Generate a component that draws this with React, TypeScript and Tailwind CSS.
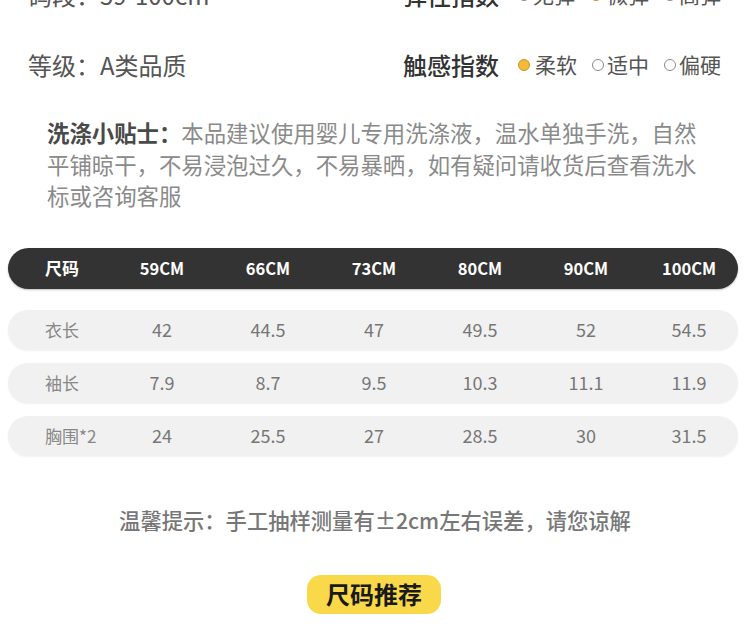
import * as React from 'react';

const sizes = ['59CM', '66CM', '73CM', '80CM', '90CM', '100CM'];

const rows = [
  { label: '衣长', values: ['42', '44.5', '47', '49.5', '52', '54.5'] },
  { label: '袖长', values: ['7.9', '8.7', '9.5', '10.3', '11.1', '11.9'] },
  { label: '胸围*2', values: ['24', '25.5', '27', '28.5', '30', '31.5'] },
];

const font = { fontFamily: '"Noto Sans CJK SC", "Noto Sans", sans-serif' };

// one option dot: filled yellow when selected, hollow ring otherwise
function Dot({ on }: { on?: boolean }) {
  return on ? (
    <span className="inline-block w-[12px] h-[12px] rounded-full bg-[#f2bb3a] border border-[#c99420] mr-[5px]" />
  ) : (
    <span className="inline-block w-[12px] h-[12px] rounded-full border-[1.5px] border-[#8a8a8a] mr-[3px]" />
  );
}

function Index({ title, options, active }: { title: string; options: string[]; active: number }) {
  return (
    <div className="flex items-center">
      <span className="text-[24px] text-[#333] font-medium mr-[19px]">{title}</span>
      {options.map((o, i) => (
        <span key={o} className="flex items-center text-[21px] text-[#555] mr-[15px]">
          <Dot on={i === active} />
          {o}
        </span>
      ))}
    </div>
  );
}

export default function App() {
  return (
    <div className="w-[750px] h-[635px] bg-white overflow-hidden" style={font}>
      <div className="flex justify-between items-center h-[30px] mt-[-20px] pl-[28px]">
        <span className="text-[24px] text-[#555]">码段：59-100cm</span>
        <div className="w-[347px]">
          <Index title="弹性指数" options={['无弹', '微弹', '高弹']} active={1} />
        </div>
      </div>

      <div className="flex justify-between items-center h-[30px] mt-[40px] pl-[28px]">
        <span className="text-[24px] text-[#555]">等级：A类品质</span>
        <div className="w-[347px]">
          <Index title="触感指数" options={['柔软', '适中', '偏硬']} active={0} />
        </div>
      </div>

      <p className="mt-[37px] pl-[47px] text-[22.4px] leading-[31.5px] text-[#8a8a8a]">
        <span className="font-bold text-[#4a4a4a]">洗涤小贴士：</span>
        本品建议使用婴儿专用洗涤液，温水单独手洗，自然
        <br />
        平铺晾干，不易浸泡过久，不易暴晒，如有疑问请收货后查看洗水
        <br />
        标或咨询客服
      </p>

      <div className="mt-[36px] mx-[8px] w-[730px] h-[41px] rounded-full bg-[#333333] grid grid-cols-[101px_repeat(5,106px)_100px] items-center text-white text-[16.5px] font-bold shadow-[0_1px_2px_rgba(0,0,0,0.25)]">
        <span className="pl-[37px] text-[17px]">尺码</span>
        {sizes.map((s) => (
          <span key={s} className="text-center">{s}</span>
        ))}
      </div>

      <div className="mt-[21px] flex flex-col gap-[13px]">
        {rows.map((r) => (
          <div
            key={r.label}
            className="mx-[8px] w-[730px] h-[40px] rounded-full bg-[#f1f1f1] grid grid-cols-[101px_repeat(5,106px)_100px] items-center text-[#777] text-[18px] shadow-[0_1px_2px_rgba(0,0,0,0.06)]"
          >
            <span className="pl-[37px] text-[17px] text-[#888]">{r.label}</span>
            {r.values.map((v, i) => (
              <span key={i} className="text-center">{v}</span>
            ))}
          </div>
        ))}
      </div>

      <p className="mt-[50px] text-center text-[21.3px] leading-[28px] font-medium text-[#777]">
        温馨提示：手工抽样测量有±2cm左右误差，请您谅解
      </p>

      <div className="mt-[41px] flex justify-center">
        <div className="w-[134px] h-[39px] rounded-[14px] bg-[#f9d94a] flex items-center justify-center text-[24px] font-bold text-[#1a1a1a] ml-[-2px]">
          尺码推荐
        </div>
      </div>
    </div>
  );
}
